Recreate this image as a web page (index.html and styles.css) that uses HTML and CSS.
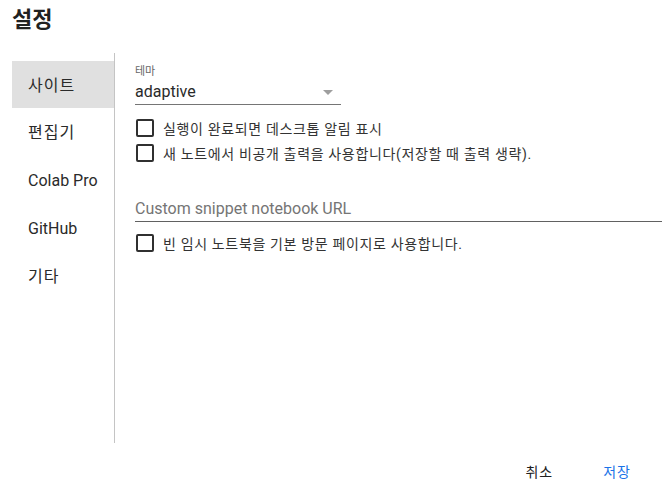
FILE: index.html
```html
<!DOCTYPE html>
<html lang="ko">
<head>
<meta charset="utf-8">
<link rel="stylesheet" href="styles.css">
</head>
<body>
<div class="dialog">
  <h1 class="title">설정</h1>
  <div class="main">
    <nav class="sidebar">
      <div class="nav-item ko selected">사이트</div>
      <div class="nav-item ko">편집기</div>
      <div class="nav-item">Colab Pro</div>
      <div class="nav-item">GitHub</div>
      <div class="nav-item ko">기타</div>
    </nav>
    <section class="content">
      <div class="field-label">테마</div>
      <div class="select">
        <span class="select-value">adaptive</span>
        <span class="select-arrow"></span>
      </div>
      <label class="check-row first"><span class="box"></span><span>실행이 완료되면 데스크톱 알림 표시</span></label>
      <label class="check-row"><span class="box"></span><span>새 노트에서 비공개 출력을 사용합니다(저장할 때 출력 생략).</span></label>
      <div class="text-input">Custom snippet notebook URL</div>
      <label class="check-row"><span class="box"></span><span>빈 임시 노트북을 기본 방문 페이지로 사용합니다.</span></label>
    </section>
  </div>
  <div class="footer">
    <button class="btn">취소</button>
    <button class="btn primary">저장</button>
  </div>
</div>
</body>
</html>
```
FILE: styles.css
```css
* { box-sizing: border-box; }
body {
  margin: 0;
  background: #fff;
  font-family: Roboto, "Noto Sans CJK KR", sans-serif;
  color: #212121;
}
.dialog {
  width: 671px;
  height: 485px;
}
.title {
  margin: 0;
  padding: 6px 12px 0;
  font-size: 22px;
  font-weight: 700;
  line-height: 28px;
  height: 53px;
  color: #212121;
}
.main {
  display: flex;
  height: 390px;
}
.sidebar {
  margin-left: 12px;
  width: 103px;
  border-right: 1px solid #c4c4c4;
  padding-top: 8px;
}
.nav-item {
  height: 48px;
  line-height: 46px;
  padding-top: 2px;
  padding-left: 16px;
  font-size: 16px;
  color: #2a2a2a;
}
.nav-item.ko {
  letter-spacing: 1px;
}
.nav-item.selected {
  background: #e0e0e0;
  height: 47px;
}
.content {
  flex: 1;
  padding: 12px 9px 0 20px;
}
.field-label {
  font-size: 11px;
  line-height: 13px;
  color: #666;
}
.select {
  width: 206px;
  height: 27px;
  border-bottom: 1px solid #757575;
  display: flex;
  align-items: center;
  justify-content: space-between;
  padding-right: 8px;
}
.select-value {
  font-size: 16px;
  color: #2a2a2a;
  line-height: 20px;
  padding-top: 2px;
}
.select-arrow {
  width: 0;
  height: 0;
  border-left: 5px solid transparent;
  border-right: 5px solid transparent;
  border-top: 5px solid #9e9e9e;
  margin-top: 2px;
}
.check-row {
  display: flex;
  align-items: center;
  gap: 9px;
  height: 25px;
  font-size: 14px;
  letter-spacing: 0.65px;
  color: #333;
  padding-left: 1px;
}
.check-row.first {
  margin-top: 10px;
}
.box {
  width: 18px;
  height: 18px;
  border: 2px solid #303030;
  border-radius: 2px;
  flex: none;
}
.text-input {
  margin-top: 29px;
  height: 28px;
  padding-top: 3px;
  border-bottom: 1px solid #616161;
  font-size: 16px;
  line-height: 24px;
  color: #757575;
  margin-bottom: 8px;
}
.footer {
  display: flex;
  justify-content: flex-end;
  gap: 18px;
  padding-right: 24px;
  padding-top: 10px;
}
.btn {
  font-family: Roboto, "Noto Sans CJK KR", sans-serif;
  font-size: 14px;
  letter-spacing: 1px;
  background: none;
  border: none;
  padding: 0 16px;
  height: 36px;
  color: #212121;
}
.btn.primary {
  color: #1a73e8;
}
```
